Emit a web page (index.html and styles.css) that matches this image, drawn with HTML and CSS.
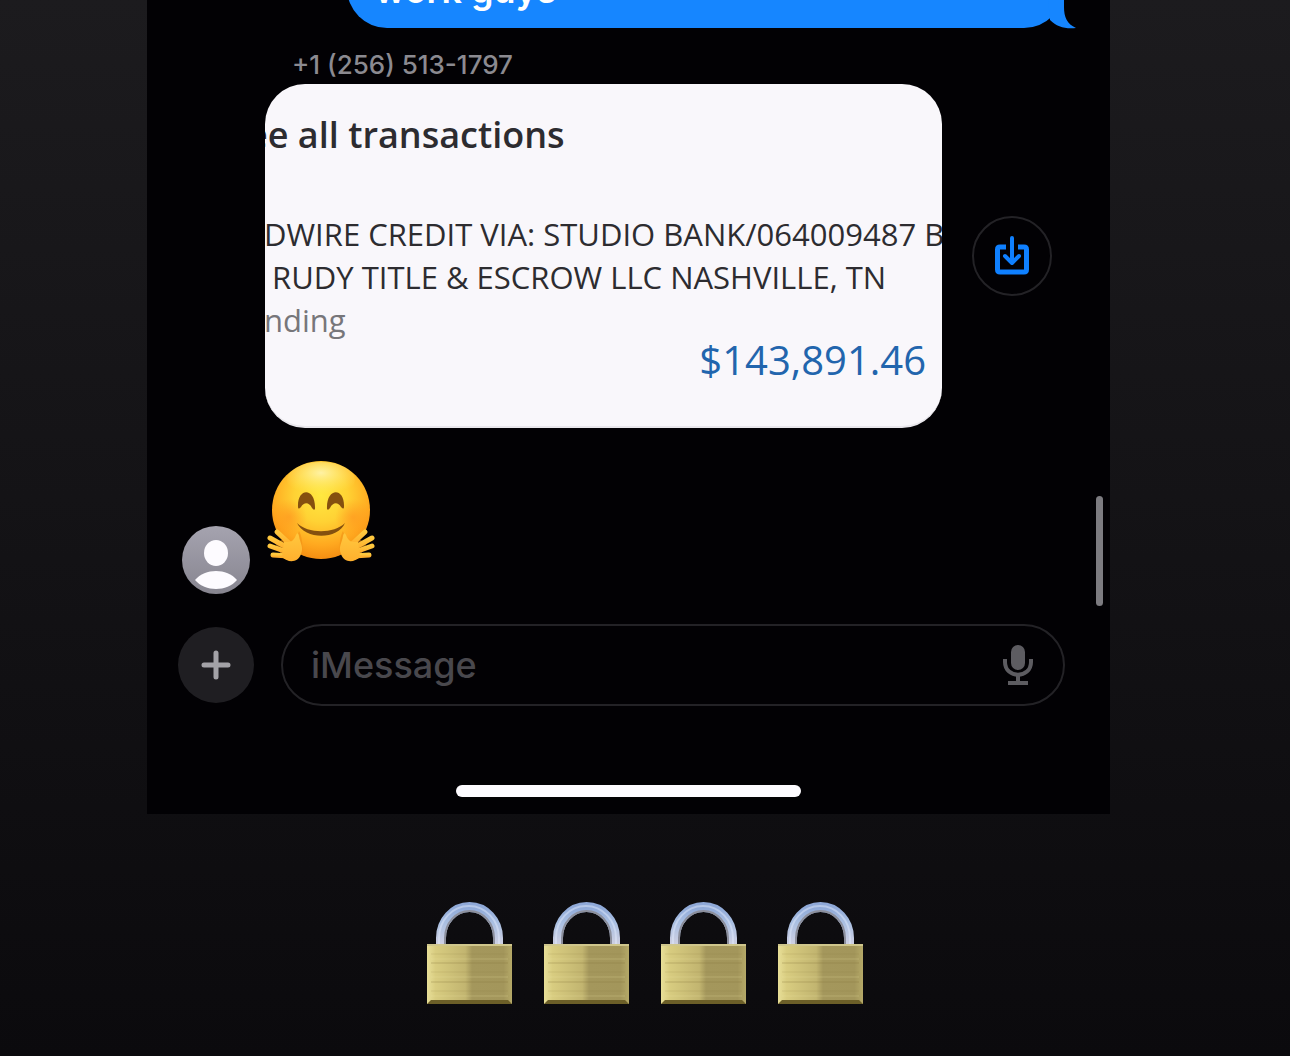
FILE: index.html
```html
<!DOCTYPE html>
<html lang="en">
<head>
  <meta charset="UTF-8">
  <meta name="viewport" content="width=device-width, initial-scale=1">
  <title>Messages</title>
  <link rel="stylesheet" href="styles.css">
</head>
<body>

  <main class="phone">
    <div class="bubble">
      work guys
      <svg class="bubble-tail" viewBox="0 0 28 30" aria-hidden="true">
        <path d="M0 0H16V8C16 18 19 25 28 29C17 30 9 28 2 21Z" fill="#1686ff"/>
      </svg>
    </div>

    <div class="sender">+1 (256) 513-1797</div>

    <div class="photo-row">
      <div class="photo">
        <h2 class="photo-title">ee all transactions</h2>
        <p class="photo-text">DWIRE CREDIT VIA: STUDIO BANK/064009487 B
 RUDY TITLE &amp; ESCROW LLC NASHVILLE, TN</p>
        <p class="photo-text pending">nding</p>
        <p class="amount">$143,891.46</p>
      </div>
      <button class="save" type="button" aria-label="Save photo">
        <svg width="36" height="40" viewBox="0 0 36 40" fill="none" stroke="#0f80ff" aria-hidden="true">
          <path d="M12 11H6Q3.500 11 3.500 13.500V33.500Q3.500 36 6 36H30Q32.500 36 32.500 33.500V13.500Q32.500 11 30 11H24" stroke-width="5"/>
          <path d="M18 2V25M11 20L18 27L25 20" stroke-width="4" stroke-linecap="round" stroke-linejoin="round"/>
        </svg>
      </button>
    </div>

    <div class="reply-row">
      <svg class="avatar" viewBox="0 0 68 68" aria-hidden="true">
        <defs>
          <linearGradient id="avatarFill" x1="0" y1="0" x2="0" y2="1">
            <stop offset="0" stop-color="#a5a3af"/>
            <stop offset="1" stop-color="#878590"/>
          </linearGradient>
        </defs>
        <circle cx="34" cy="34" r="34" fill="url(#avatarFill)"/>
        <ellipse cx="34" cy="27" rx="12" ry="13" fill="#fdfbff"/>
        <path d="M13 54C23 42 45 42 55 54C45 66 23 66 13 54Z" fill="#fdfbff"/>
      </svg>

      <svg class="hug" viewBox="12 15 108 104" role="img" aria-label="Hugging face">
        <defs>
          <radialGradient id="face" cx="0.5" cy="0.35" r="0.68">
            <stop offset="0" stop-color="#ffe840"/>
            <stop offset="0.4" stop-color="#ffd234"/>
            <stop offset="0.75" stop-color="#ffa81f"/>
            <stop offset="1" stop-color="#f2880f"/>
          </radialGradient>
          <radialGradient id="shine" cx="0.5" cy="0.3" r="0.6">
            <stop offset="0" stop-color="#fff9c0" stop-opacity="0.8"/>
            <stop offset="1" stop-color="#fff070" stop-opacity="0"/>
          </radialGradient>
          <radialGradient id="cheek">
            <stop offset="0" stop-color="#ff8a1c" stop-opacity="0.5"/>
            <stop offset="1" stop-color="#ff8a18" stop-opacity="0"/>
          </radialGradient>
          <linearGradient id="palm" x1="0" y1="0" x2="0" y2="1">
            <stop offset="0" stop-color="#ffc83e"/>
            <stop offset="1" stop-color="#ffb02e"/>
          </linearGradient>
        </defs>
        <circle cx="66" cy="65" r="49" fill="url(#face)"/>
        <ellipse cx="66" cy="35" rx="34" ry="18" fill="url(#shine)"/>
        <circle cx="34" cy="72" r="18" fill="url(#cheek)"/>
        <circle cx="98" cy="72" r="18" fill="url(#cheek)"/>
        <g fill="#85500f">
          <path d="M43 62C42 42 61 42 60 64Q59 66 57 63C54 57 49 57 46 62Q43 65 43 62Z"/>
          <path d="M89 62C90 42 71 42 72 64Q73 66 75 63C78 57 83 57 86 62Q89 65 89 62Z"/>
          <path d="M42 78C53 89 79 89 90 78C83 95 50 95 42 78Z"/>
        </g>
        <g id="hand">
          <path d="M44 86C47 91 48 101 47 107C45 113 36 118 28 113L20 98L31 93C37 99 41 96 44 86Z" fill="#ee8e14" opacity="0.55"/>
          <g fill="none" stroke="url(#palm)" stroke-width="5" stroke-linecap="round">
            <path d="M22 87L35 99"/>
            <path d="M15 93L33 103"/>
            <path d="M15 101L32 107"/>
            <path d="M18 110L34 111"/>
          </g>
          <path d="M29 97C34 97 38 98 41 90Q43 86 44 91C45 98 49 102 46 109C43 118 33 118 27 112Z" fill="url(#palm)"/>
        </g>
        <use href="#hand" transform="translate(132 0) scale(-1 1)"/>
      </svg>
    </div>

    <form class="composer">
      <button class="plus" type="button" aria-label="Add attachment">
        <svg width="30" height="30" viewBox="0 0 30 30" stroke="#a3a2a7" stroke-width="5" stroke-linecap="round" aria-hidden="true">
          <path d="M15 3V27M3 15H27"/>
        </svg>
      </button>
      <div class="field">
        <input class="field-input" type="text" placeholder="iMessage" aria-label="iMessage">
        <button class="mic" type="button" aria-label="Dictate">
          <svg width="30" height="40" viewBox="0 0 30 40" fill="none" stroke="#5d5c61" aria-hidden="true">
            <rect x="8" y="0" width="14" height="25" rx="7" fill="#5d5c61" stroke="none"/>
            <path d="M2 14V17C2 34 28 34 28 17V14" stroke-width="4"/>
            <path d="M15 30V37" stroke-width="4"/>
            <path d="M5 38H25" stroke-width="4"/>
          </svg>
        </button>
      </div>
    </form>

    <div class="home-bar"></div>
    <div class="scrollbar"></div>
  </main>

  <div class="locks">
    <svg class="lock" viewBox="0 0 85 104" role="img" aria-label="Locked">
      <defs>
        <linearGradient id="brass" x1="0" y1="0" x2="1" y2="0">
          <stop offset="0" stop-color="#e8df98"/>
          <stop offset="0.1" stop-color="#d8cc80"/>
          <stop offset="0.45" stop-color="#c2b570"/>
          <stop offset="0.53" stop-color="#a4975c"/>
          <stop offset="0.9" stop-color="#a3965b"/>
          <stop offset="1" stop-color="#b5a968"/>
        </linearGradient>
        <linearGradient id="steel" x1="0" y1="0" x2="0" y2="1">
          <stop offset="0" stop-color="#8fa9d8"/>
          <stop offset="0.4" stop-color="#a9bfe2"/>
          <stop offset="1" stop-color="#cfd0e2"/>
        </linearGradient>
      </defs>
      <g id="lock">
        <path d="M14 44V37A28.500 31 0 0 1 71 37V44" fill="none" stroke="url(#steel)" stroke-width="10"/>
        <path d="M18 44V37A24.500 27 0 0 1 67 37V44" fill="none" stroke="#8c8f9c" stroke-width="2"/>
        <path d="M12 44V37A30 32 0 0 1 72 37V44" fill="none" stroke="#e4edff" stroke-width="2" opacity="0.45"/>
        <rect x="0" y="43" width="85" height="60" fill="url(#brass)"/>
        <path d="M0 44H85" stroke="#cfc68c" stroke-width="2"/>
        <path d="M4 62H81M4 81H81" stroke="#86753a" stroke-width="1" opacity="0.35"/>
        <path d="M4 53H81M4 71H81M4 90H81" stroke="#86753a" stroke-width="1" opacity="0.15"/>
        <path d="M4 58H81M4 76H81M4 95H81" stroke="#eee6a5" stroke-width="1" opacity="0.25"/>
        <path d="M0 103L4 99H81L85 103Z" fill="#6c5f28"/>
      </g>
    </svg>
    <svg class="lock" viewBox="0 0 85 104" role="img" aria-label="Locked"><use href="#lock"/></svg>
    <svg class="lock" viewBox="0 0 85 104" role="img" aria-label="Locked"><use href="#lock"/></svg>
    <svg class="lock" viewBox="0 0 85 104" role="img" aria-label="Locked"><use href="#lock"/></svg>
  </div>

</body>
</html>
```
FILE: styles.css
```css
* {
  box-sizing: border-box;
}

body {
  margin: 0;
  min-height: 100vh;
  background: linear-gradient(#1c1b1e, #0b0a0d);
  font-family: Inter, "Liberation Sans", sans-serif;
}

h2, p {
  margin: 0;
}

button {
  display: flex;
  align-items: center;
  justify-content: center;
  flex: none;
  padding: 0;
  border: none;
  background: none;
  cursor: pointer;
}

/* phone screen */
.phone {
  position: relative;
  margin: 0 180px 0 147px;
  padding-bottom: 17px;
  background: #020104;
  overflow: hidden;
}

/* outgoing message, scrolled partly off the top */
.bubble {
  position: relative;
  margin: -60px 46px 0 200px;
  padding: 26px 28px 14px;
  border-radius: 40px;
  background: #1686ff;
  color: #fff;
  font-size: 36px;
  font-weight: 600;
  line-height: 48px;
}

.bubble-tail {
  position: absolute;
  right: -12px;
  bottom: -1px;
  width: 28px;
  height: 30px;
}

.sender {
  margin: 21px 0 3px 145px;
  color: #8b8a90;
  font-size: 26px;
  font-weight: 500;
  line-height: 32px;
}

.photo-row {
  display: flex;
  align-items: center;
  gap: 30px;
  padding: 0 58px 0 118px;
}

/* cropped bank screenshot */
.photo {
  flex: 1;
  min-width: 0;
  padding: 28px 16px 48px 0;
  border-radius: 40px;
  border-bottom: 2px solid #e9e7ec;
  background: #f9f7fb;
  color: #2d2c30;
  font-family: "Open Sans", "Noto Sans", sans-serif;
  overflow: hidden;
}

.photo-title {
  margin: 0 0 55px -18px;
  font-size: 36px;
  font-weight: 600;
  line-height: 46px;
}

.photo-text {
  margin-left: -1px;
  font-size: 31px;
  line-height: 43px;
  white-space: pre;
}

.pending {
  color: #77767a;
}

.amount {
  color: #2265ad;
  font-size: 40px;
  line-height: 36px;
  text-align: right;
}

.save {
  width: 80px;
  height: 80px;
  border: 2px solid #232226;
  border-radius: 50%;
}

.reply-row {
  display: flex;
  align-items: flex-end;
  gap: 17px;
  padding: 32px 35px 0;
}

.avatar {
  width: 68px;
  height: 68px;
}

.hug {
  width: 108px;
  height: 104px;
  margin-bottom: 30px;
}

/* message field */
.composer {
  display: flex;
  align-items: center;
  gap: 27px;
  padding: 30px 45px 0 31px;
}

.plus {
  width: 76px;
  height: 76px;
  border-radius: 50%;
  background: #1f1e22;
}

.field {
  display: flex;
  flex: 1;
  align-items: center;
  height: 82px;
  padding: 0 30px 0 28px;
  border: 2px solid #232226;
  border-radius: 41px;
}

.field-input {
  flex: 1;
  min-width: 0;
  padding: 0;
  border: none;
  outline: none;
  background: none;
  color: #fff;
  font: 500 36px Inter, "Liberation Sans", sans-serif;
}

.field-input::placeholder {
  color: #49484d;
  opacity: 1;
}

.home-bar {
  width: 345px;
  height: 12px;
  margin: 79px auto 0;
  border-radius: 6px;
  background: #fdfbff;
}

.scrollbar {
  position: absolute;
  top: 496px;
  right: 7px;
  width: 7px;
  height: 110px;
  border-radius: 4px;
  background: #7c7b80;
}

/* caption emoji */
.locks {
  display: flex;
  justify-content: center;
  gap: 32px;
  padding: 87px 0 51px;
}

.lock {
  width: 85px;
  height: 104px;
}
```
